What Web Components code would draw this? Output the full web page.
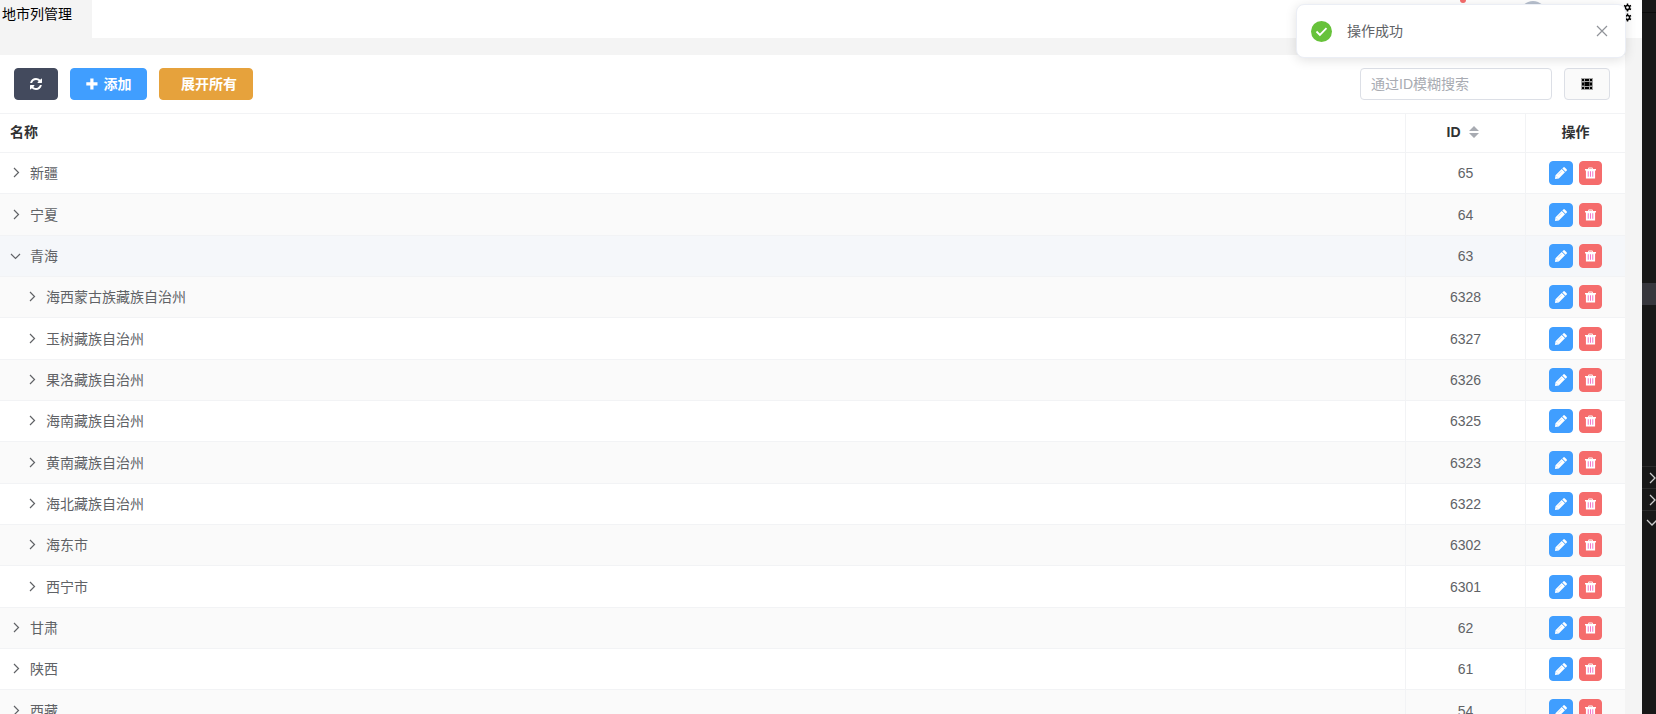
<!DOCTYPE html>
<html lang="zh-CN">
<head>
<meta charset="utf-8">
<title>地市列管理</title>
<style>
html, body { margin: 0; height: 100%; }
body { font: 14px/20px "Liberation Sans", "Noto Sans CJK SC", sans-serif; color: #606266; background: #f4f4f4; overflow: hidden; }
</style>
</head>
<body>
<admin-app></admin-app>
<script>
const define = (name, html, setup) => {
  const tpl = document.createElement('template');
  tpl.innerHTML = html;
  customElements.define(name, class extends HTMLElement {
    constructor() {
      super();
      this.attachShadow({ mode: 'open' }).append(tpl.content.cloneNode(true));
    }
    connectedCallback() { if (setup) setup(this, this.shadowRoot); }
  });
};

const ICONS = {
  refresh: '<svg viewBox="0 0 1536 1536"><path fill="currentColor" d="M1511 928q0 5-1 7-64 268-268 434.500T764 1536q-146 0-282.500-55T238 1324l-129 129q-19 19-45 19t-45-19-19-45V960q0-26 19-45t45-19h448q26 0 45 19t19 45-19 45l-137 137q71 66 161 102t187 36q134 0 250-65t186-179q11-17 53-117 8-23 30-23h192q13 0 22.500 9.500t9.500 22.500zm25-800v448q0 26-19 45t-45 19h-448q-26 0-45-19t-19-45 19-45l138-138Q969 256 768 256q-134 0-250 65T332 500q-11 17-53 117-8 23-30 23H50q-13 0-22.500-9.500T18 608v-7q65-268 270-434.500T768 0q146 0 284 55.500T1297 212l130-129q19-19 45-19t45 19 19 45z"/></svg>',
  plus: '<svg viewBox="0 0 12 12"><path fill="currentColor" d="M4.300 0.500h3.200v3.800h4v3.200h-4v4H4.300v-4H.3V4.300h4z"/></svg>',
  grid: '<svg viewBox="0 0 12 12"><path fill="#a3a3a3" d="M0 0h12v12H0z"/><path fill="#555" d="M1 4h10v4H1z"/><path fill="#000" d="M1 1h2v2H1zM4 1h4v2H4zM9 1h2v2H9zM1 5h2v2H1zM4 4h4v4H4zM9 5h2v2H9zM1 9h2v2H1zM4 9h4v2H4zM9 9h2v2H9z"/></svg>',
  pencil: '<svg viewBox="0 0 12 12"><path fill="#fff" d="M8.300.4a1.100 1.100 0 0 1 1.500 0l1.800 1.800a1.100 1.100 0 0 1 0 1.500l-1 1-3.300-3.300zM6.700 2l3.300 3.300L3.800 11.500 0 12l.5-3.800z"/><path d="M3.200 7.600L6.600 4.200M1.400 9.200l1.400 1.400" stroke="#a9d6ff" stroke-width=".7"/></svg>',
  trash: '<svg viewBox="0 0 12 12"><path fill="#fff" fill-rule="evenodd" d="M4 0h4l.8 1.700H12v1.500h-1V12H1V3.200H0V1.700h3.200zm.6 1l-.3.700h3.400L7.400 1z"/><path fill="#f36bc4" d="M3 4h1v6H3zM5.500 4h1v6h-1zM8 4h1v6H8z"/></svg>'
};

define('ui-icon', `
<style>
:host { display: inline-flex; width: 12px; height: 12px; }
span { display: flex; width: 100%; height: 100%; }
svg { display: block; width: 100%; height: 100%; }
</style>
<span></span>`, (el, root) => { root.querySelector('span').innerHTML = ICONS[el.getAttribute('name')]; });

define('ui-button', `
<style>
:host { display: inline-flex; }
button { display: flex; align-items: center; justify-content: center; gap: 6px; width: 100%; height: 32px; padding: 0; box-sizing: border-box;
  border: 1px solid var(--edge, var(--fill)); border-radius: 4px; background: var(--fill); color: #fff; font: inherit; font-weight: 700; cursor: pointer; }
:host([small]) button { height: 24px; }
</style>
<button type="button"><slot></slot></button>`, (el, root) => {
  if (el.getAttribute('label')) root.querySelector('button').setAttribute('aria-label', el.getAttribute('label'));
});

define('tab-bar', `
<style>
:host { display: flex; justify-content: space-between; height: 38px; background: #fff; }
a { width: 92px; box-sizing: border-box; padding: 4px 2px; background: #f4f4f4; color: #000; text-decoration: none; }
.tools { position: relative; width: 200px; overflow: hidden; }
.dot { position: absolute; left: 18px; top: -3px; width: 6px; height: 6px; border-radius: 50%; background: #f56c6c; }
.avatar { position: absolute; left: 78px; top: 1px; width: 26px; height: 26px; border-radius: 50%; background: #b8c1cf; }
svg { position: absolute; right: 10px; top: 3px; width: 9px; height: 19px; }
</style>
<a href="#">地市列管理</a>
<div class="tools"><span class="dot"></span><span class="avatar"></span>
<svg viewBox="0 0 9 19" fill="none" stroke="#000"><g id="g"><circle cx="4.500" cy="4.500" r="2.100" stroke-width="1.500"/><path d="M4.500 2V.5M4.500 7v1.500M2.300 3.200L1 2.500M6.700 3.200L8 2.500M2.300 5.800L1 6.500M6.700 5.800L8 6.500" stroke-width="1.500"/></g><use href="#g" y="10"/></svg></div>`);

define('tool-bar', `
<style>
:host { display: flex; align-items: center; gap: 12px; padding: 13px 15px 13px 14px; background: #fff; }
.refresh { --fill: #434a5d; width: 44px; }
.add { --fill: #409eff; width: 77px; }
.expand { --fill: #e6a23c; width: 94px; }
.expand span { padding-left: 6px; }
.cols { --fill: #fafafa; --edge: #dcdfe6; width: 46px; }
ui-button { white-space: nowrap; }
input { width: 192px; height: 32px; box-sizing: border-box; margin-left: auto; padding: 0 10px; border: 1px solid #dcdfe6; border-radius: 4px; font: inherit; color: #606266; }
input::placeholder { color: #a8abb2; }
</style>
<ui-button class="refresh" label="刷新"><ui-icon name="refresh"></ui-icon></ui-button>
<ui-button class="add"><ui-icon name="plus"></ui-icon>添加</ui-button>
<ui-button class="expand"><span>展开所有</span></ui-button>
<input type="text" aria-label="通过ID模糊搜索" placeholder="通过ID模糊搜索">
<ui-button class="cols" label="列设置"><ui-icon name="grid"></ui-icon></ui-button>`);

const ROWS = [
  ['新疆', 65], ['宁夏', 64], ['青海', 63, 'open'],
  ['海西蒙古族藏族自治州', 6328, 'child'], ['玉树藏族自治州', 6327, 'child'], ['果洛藏族自治州', 6326, 'child'],
  ['海南藏族自治州', 6325, 'child'], ['黄南藏族自治州', 6323, 'child'], ['海北藏族自治州', 6322, 'child'],
  ['海东市', 6302, 'child'], ['西宁市', 6301, 'child'], ['甘肃', 62], ['陕西', 61], ['西藏', 54]
];

define('region-table', `
<style>
:host { display: block; background: #fff; }
table { width: 100%; table-layout: fixed; border-collapse: separate; border-spacing: 0; }
th, td { box-sizing: border-box; height: 41px; padding: 0; border-bottom: 1px solid #f2f3f5; text-align: center; }
th + th, td + td { border-left: 1px solid #f2f3f5; }
th { height: 40px; padding-bottom: 2px; border-top: 1px solid #f2f3f5; color: #303133; font-weight: 700; }
th:first-child { padding-left: 10px; text-align: left; }
tr:nth-child(3n+2) td { height: 42px; }
tr:nth-child(even) td { background: #fafafa; }
tr.open td { background: #f5f7fa; }
.id { width: 120px; }
.ops { width: 100px; }
.name { display: flex; align-items: center; gap: 9px; padding-left: 10px; }
.child .name { padding-left: 26px; }
.toggle { display: flex; width: 11px; height: 12px; padding: 0; border: 0; background: none; }
.toggle svg { width: 11px; height: 11px; }
.open .toggle svg { transform: rotate(90deg); }
.sorter { display: inline-flex; align-items: center; gap: 8px; margin-right: 6px; }
.actions { display: flex; justify-content: center; gap: 6px; }
.edit { --fill: #409eff; width: 24px; }
.delete { --fill: #f56c6c; width: 23px; }
.delete ui-icon { width: 11px; }
</style>
<table>
<colgroup><col><col class="id"><col class="ops"></colgroup>
<thead><tr><th scope="col">名称</th><th scope="col"><span class="sorter">ID <svg width="10" height="12" viewBox="0 0 10 12" fill="#a8abb2"><path d="M5 0l5 5H0zM0 7h10l-5 5z"/></svg></span></th><th scope="col">操作</th></tr></thead>
<tbody></tbody>
</table>`, (el, root) => {
  root.querySelector('tbody').innerHTML = ROWS.map(([name, id, kind = '']) => `
<tr class="${kind}"><td><div class="name"><button class="toggle" type="button" aria-label="展开 ${name}"><svg viewBox="0 0 11 11" fill="none" stroke="#606266" stroke-width="1.200"><path d="M4 1l4.500 4.500-4.500 4.500"/></svg></button><span>${name}</span></div></td>
<td>${id}</td>
<td><div class="actions"><ui-button small class="edit" label="编辑"><ui-icon name="pencil"></ui-icon></ui-button><ui-button small class="delete" label="删除"><ui-icon name="trash"></ui-icon></ui-button></div></td></tr>`).join('');
});

define('toast-message', `
<style>
:host { position: absolute; top: 4px; right: 30px; display: flex; align-items: center; gap: 15px; width: 330px; height: 54px; box-sizing: border-box; padding: 0 17px 0 14px;
  border: 1px solid #ebeef5; border-radius: 8px; background: #fff; box-shadow: 0 2px 12px rgba(0, 0, 0, .12); }
button { display: flex; margin-left: auto; padding: 0; border: 0; background: none; }
</style>
<svg width="21" height="21" viewBox="0 0 21 21"><circle cx="10.500" cy="10.500" r="10.500" fill="#67c23a"/><path d="M5.500 10.500l3.400 3.400 6.600-6.700" fill="none" stroke="#fff" stroke-width="1.800"/></svg>
<span role="status"><slot></slot></span>
<button type="button" aria-label="关闭"><svg width="12" height="12" viewBox="0 0 12 12" stroke="#909399" stroke-width="1.200"><path d="M1 1l10 10M11 1L1 11"/></svg></button>`);

define('side-panel', `
<style>
:host { display: grid; grid-template-rows: 13px 270px 22px 161px 22px 22px 1fr; background: #181818; overflow: hidden; }
div { box-sizing: border-box; }
.top { border-bottom: 1px solid #0c0c0c; }
.current { background: #37373d; }
.item { border-top: 1px solid #2b2b2b; padding: 5px 0 0 5px; }
svg { display: block; width: 10px; height: 12px; }
.last svg { transform: rotate(90deg); }
</style>
<div class="top"></div><div></div><div class="current"></div><div></div>
<div class="item"><svg viewBox="0 0 10 12" fill="none" stroke="#ccc" stroke-width="1.300"><path d="M3 1l5 5-5 5"/></svg></div>
<div class="item"><svg viewBox="0 0 10 12" fill="none" stroke="#ccc" stroke-width="1.300"><path d="M3 1l5 5-5 5"/></svg></div>
<div class="item last"><svg viewBox="0 0 10 12" fill="none" stroke="#ccc" stroke-width="1.300"><path d="M3 1l5 5-5 5"/></svg></div>`);

define('admin-app', `
<style>
:host { position: relative; display: grid; grid-template-columns: 1fr 14px; height: 100vh; overflow: hidden; }
main { min-width: 0; overflow: hidden; }
section { margin: 17px 17px 0 0; }
</style>
<main><tab-bar></tab-bar><section><tool-bar></tool-bar><region-table></region-table></section></main>
<side-panel></side-panel>
<toast-message>操作成功</toast-message>`);
</script>
</body>
</html>
